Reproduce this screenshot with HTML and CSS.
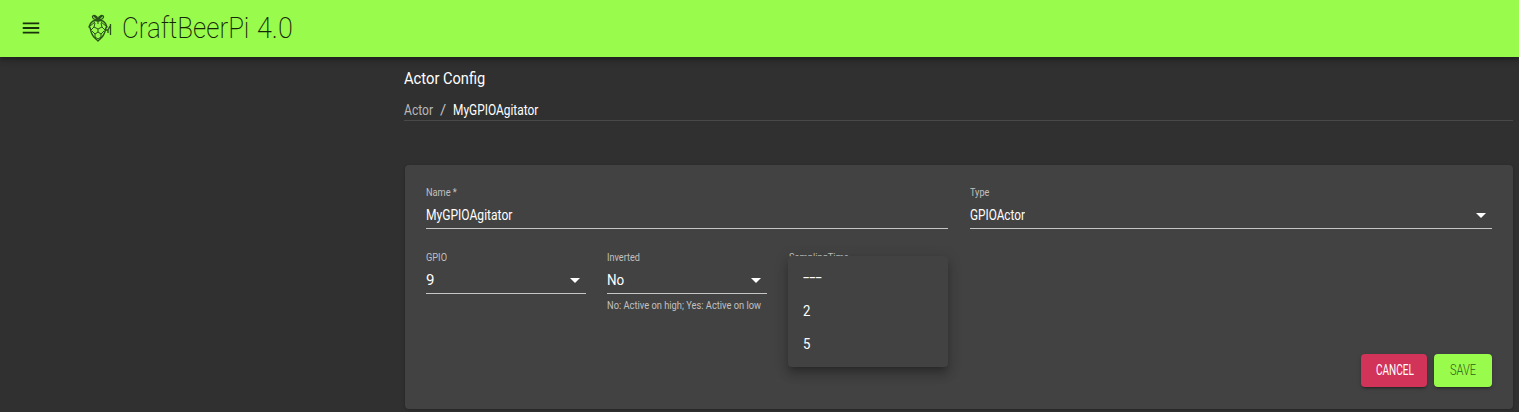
FILE: index.html
```html
<!DOCTYPE html>
<html lang="en">
<head>
<meta charset="utf-8">
<title>CraftBeerPi 4.0</title>
<link rel="stylesheet" href="styles.css">
</head>
<body>
<header class="appbar">
  <svg class="menu-icon" viewBox="0 0 24 24"><path d="M3 18h18v-2H3v2zm0-5h18v-2H3v2zm0-7v2h18V6H3z"/></svg>
  <svg class="logo" viewBox="0 0 24 28"><g fill="none" stroke="#29521a" stroke-width="1" stroke-linejoin="round">
    <path d="M10 6C7 6 4 4.500 4.500 2.500C5 .8 9 1 10 5.500C11 1 15 .8 15.500 2.500C16 4.500 13 6 10 6ZM6 2l3 3M14 2l-3 3" stroke-width="1.300"/>
    <path d="M10 7C6 5.500 2.500 7.500 1 13C3 13 2 17 4 20C5 23 8 25 10 27C12 25 15 23 16 20C18 17 17 13 19 13C17.500 7.500 14 5.500 10 7Z" stroke-width="1.400"/>
    <path d="M2 12l5-4M18 12l-5-4M7 9l-1 4l4 2l4-2l-1-4M10 7v3M6 13l-3 3M14 13l3 3M10 15v3l-3 2l-3-3M10 18l3 2l3-3M7 20v3l3 2l3-2v-3"/>
    <path d="M18 16h2l2-4M20 16v3M22.500 10v11" stroke-width="1.300"/>
  </g></svg>
  <h1 class="brand"><span class="t" data-w="127">CraftBeerPi</span> <span class="t" data-w="36">4.0</span></h1>
</header>
<main class="page">
  <h2 class="heading"><span class="t" data-w="35">Actor</span> <span class="t" data-w="42">Config</span></h2>
  <nav class="crumbs">
    <a class="crumb"><span class="t" data-w="29">Actor</span></a>
    <span class="sep">/</span>
    <span class="current"><span class="t" data-w="85">MyGPIOAgitator</span></span>
  </nav>
  <section class="card">
    <div class="row two">
      <div class="field"><label><span class="t" data-w="31">Name *</span></label><div class="input"><span class="t" data-w="86">MyGPIOAgitator</span></div></div>
      <div class="field"><label><span class="t" data-w="19">Type</span></label><div class="input"><span class="t" data-w="55">GPIOActor</span><i class="arrow"></i></div></div>
    </div>
    <div class="row six">
      <div class="field"><label><span class="t" data-w="21">GPIO</span></label><div class="input"><span class="t" data-w="8">9</span><i class="arrow"></i></div></div>
      <div class="field"><label><span class="t" data-w="33">Inverted</span></label><div class="input"><span class="t" data-w="17">No</span><i class="arrow"></i></div><p class="help"><span class="t" data-w="154">No: Active on high; Yes: Active on low</span></p></div>
      <div class="field anchor"><label><span class="t" data-w="60">SamplingTime</span></label>
        <ul class="menu"><li><span class="t" data-w="18">---</span></li><li class="number"><span class="t" data-w="7">2</span></li><li class="number"><span class="t" data-w="7">5</span></li></ul>
      </div>
    </div>
    <div class="actions">
      <button class="btn cancel"><span class="t" data-w="38">CANCEL</span></button>
      <button class="btn save"><span class="t" data-w="26">SAVE</span></button>
    </div>
  </section>
</main>
<script src="fit.js"></script>
</body>
</html>
```
FILE: fit.js
```js
document.querySelectorAll('.t').forEach(function (el) {
  var natural = el.offsetWidth;
  var width = Number(el.dataset.w);
  el.style.transform = 'scaleX(' + width / natural + ')';
  el.style.marginRight = width - natural + 'px';
});
```
FILE: styles.css
```css
* { box-sizing: border-box; }
body { margin: 0; height: 412px; overflow: hidden; background: #303030; color: #fff; font: 15px/20px Roboto, sans-serif; }
h1, h2, p, ul { margin: 0; padding: 0; font-weight: inherit; }
.t { display: inline-block; white-space: nowrap; transform-origin: 0 50%; }
.appbar { height: 57px; padding-bottom: 2px; display: flex; align-items: center; background: #99fb4b; color: #14260a; box-shadow: 0 2px 4px -1px rgba(0,0,0,.2), 0 4px 5px rgba(0,0,0,.14), 0 1px 10px rgba(0,0,0,.12); position: relative; }
.menu-icon { width: 22px; height: 22px; margin-left: 20px; fill: #18330c; }
.logo { width: 24px; height: 28px; margin-left: 46px; }
.brand { font-size: 30px; line-height: 40px; font-weight: 200; margin-left: 10px; }
.page { padding-left: 404px; padding-right: 6px; }
.heading { padding-top: 12px; font-size: 16px; line-height: 20px; }
.crumbs { display: flex; height: 32px; padding-top: 11px; border-bottom: 1px solid #494949; line-height: 20px; }
.crumb { color: #b8b8b8; }
.sep { color: #c1c1c1; width: 20px; padding-left: 7px; }
.card { margin: 44px 0 0 1px; height: 244px; padding: 21px; border-radius: 4px; background: #424242; box-shadow: 0 1px 3px rgba(0,0,0,.25); display: flex; flex-direction: column; }
.row { display: grid; column-gap: 21px; height: 65px; }
.two { grid-template-columns: 522px 522px; column-gap: 22px; }
.six { grid-template-columns: repeat(3, 160px); }
.field { font-size: 15px; }
label { display: block; height: 13px; font-size: 11px; line-height: 13px; color: #c0c0c0; }
.input { height: 30px; padding-top: 6px; border-bottom: 1px solid #c6c6c6; display: flex; justify-content: space-between; line-height: 20px; }
.arrow { width: 10px; height: 5px; margin: 8px 6px 0 0; background: #fff; clip-path: polygon(0 0, 100% 0, 50% 100%); }
.help { padding-top: 5px; font-size: 11px; line-height: 13px; color: #c0c0c0; }
.anchor { position: relative; }
.anchor label { padding-left: 1px; }
.menu { position: absolute; left: 0; top: 5px; width: 160px; height: 111px; padding: 5px 15px; list-style: none; background: #424242; border-radius: 4px; box-shadow: 0 5px 5px -3px rgba(0,0,0,.2), 0 8px 10px 1px rgba(0,0,0,.14), 0 3px 14px 2px rgba(0,0,0,.12); }
.menu li { height: 33px; line-height: 33px; }
.menu .number { line-height: 35px; }
.actions { margin: auto 0 1px; display: flex; justify-content: flex-end; gap: 7px; }
.btn { height: 33px; border: 0; border-radius: 4px; padding: 0 0 0 15px; text-align: left; font: 14px/33px Roboto, sans-serif; box-shadow: 0 3px 1px -2px rgba(0,0,0,.2), 0 2px 2px rgba(0,0,0,.14), 0 1px 5px rgba(0,0,0,.12); }
.cancel { width: 66px; background: #d13359; color: #fff; }
.save { width: 58px; background: #99fb4b; color: #315b1b; padding-left: 16px; font-weight: 300; }
```
